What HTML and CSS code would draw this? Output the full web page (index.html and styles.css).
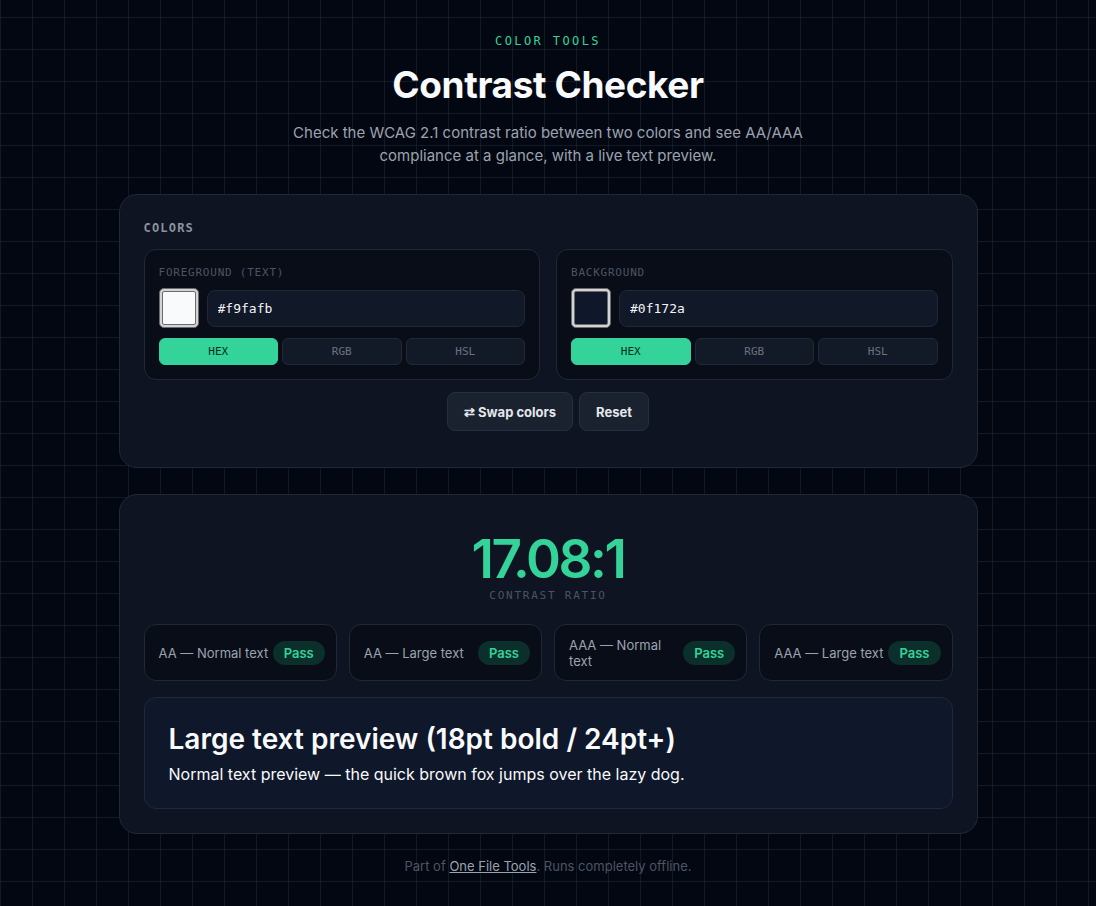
FILE: index.html
```html
<!DOCTYPE html>
<html lang="en">
<head>
    <meta charset="utf-8">
    <title>Contrast Checker</title>
    <link rel="stylesheet" href="styles.css">
</head>
<body>
<div class="page">
    <header class="head">
        <div class="eyebrow">COLOR TOOLS</div>
        <h1 class="title">Contrast Checker</h1>
        <p class="lead">Check the WCAG 2.1 contrast ratio between two colors and see AA/AAA compliance at a glance, with a live text preview.</p>
    </header>

    <section class="card">
        <div class="card-label">COLORS</div>
        <div class="pickers">
            <div class="picker">
                <div class="picker-label">FOREGROUND (TEXT)</div>
                <div class="picker-row">
                    <input type="color" class="swatch" id="fg" value="#f9fafb">
                    <input type="text" class="hex" id="fgText" value="#f9fafb">
                </div>
                <div class="formats">
                    <button class="fmt on">HEX</button>
                    <button class="fmt">RGB</button>
                    <button class="fmt">HSL</button>
                </div>
            </div>
            <div class="picker">
                <div class="picker-label">BACKGROUND</div>
                <div class="picker-row">
                    <input type="color" class="swatch" id="bg" value="#0f172a">
                    <input type="text" class="hex" id="bgText" value="#0f172a">
                </div>
                <div class="formats">
                    <button class="fmt on">HEX</button>
                    <button class="fmt">RGB</button>
                    <button class="fmt">HSL</button>
                </div>
            </div>
        </div>
        <div class="actions">
            <button class="btn">&#8644; Swap colors</button>
            <button class="btn">Reset</button>
        </div>
    </section>

    <section class="card result">
        <div class="ratio">17.08:1</div>
        <div class="ratio-label">CONTRAST RATIO</div>
        <div class="checks">
            <div class="check"><span>AA — Normal text</span><span class="badge">Pass</span></div>
            <div class="check"><span>AA — Large text</span><span class="badge">Pass</span></div>
            <div class="check"><span>AAA — Normal text</span><span class="badge">Pass</span></div>
            <div class="check"><span>AAA — Large text</span><span class="badge">Pass</span></div>
        </div>
        <div class="preview">
            <div class="preview-large">Large text preview (18pt bold / 24pt+)</div>
            <div class="preview-normal">Normal text preview — the quick brown fox jumps over the lazy dog.</div>
        </div>
    </section>

    <footer class="foot">Part of <a href="#">One File Tools</a>. Runs completely offline.</footer>
</div>
</body>
</html>
```

FILE: styles.css
```css
*{
    box-sizing: border-box;
    margin: 0;
    padding: 0;
}
body{
    background-color: #030712;
    background-image:
        linear-gradient(rgba(31,41,55,0.55) 1px, transparent 1px),
        linear-gradient(90deg, rgba(31,41,55,0.55) 1px, transparent 1px);
    background-size: 32px 32px;
    background-position: 0 17px, 0 0;
    font-family: Inter, "Noto Sans", sans-serif;
    color: #e5e7eb;
    min-height: 100vh;
}
.page{
    width: 859px;
    margin: 0 auto;
    padding: 34px 0 30px;
    display: flex;
    flex-direction: column;
    gap: 26px;
}
.head{
    text-align: center;
    margin-bottom: 1px;
}
.eyebrow{
    font-family: "DejaVu Sans Mono", monospace;
    font-size: 12px;
    letter-spacing: 0.2em;
    color: #34d399;
    line-height: 14px;
}
.title{
    margin-top: 15px;
    font-size: 37px;
    font-weight: 700;
    line-height: 44px;
    color: #f9fafb;
    letter-spacing: -0.4px;
}
.lead{
    width: 540px;
    margin: 14px auto 0;
    font-size: 15px;
    line-height: 23px;
    color: #9ca3af;
}
.card{
    background: #0e1422;
    border: 1px solid #1f2937;
    border-radius: 18px;
    padding: 25px 24px 36px;
}
.card-label{
    font-family: "DejaVu Sans Mono", monospace;
    font-size: 12px;
    font-weight: bold;
    letter-spacing: 0.1em;
    color: #8b93a1;
    line-height: 16px;
}
.pickers{
    margin-top: 13px;
    display: grid;
    grid-template-columns: 1fr 1fr;
    gap: 16px;
}
.picker{
    background: #080d18;
    border: 1px solid #1f2937;
    border-radius: 12px;
    padding: 15px 14px 14px;
}
.picker-label{
    font-family: "DejaVu Sans Mono", monospace;
    font-size: 11px;
    letter-spacing: 0.07em;
    color: #4b5563;
    line-height: 16px;
}
.picker-row{
    margin-top: 7px;
    display: flex;
    align-items: center;
    gap: 8px;
}
/* colour input drawn like the native chip: grey ring round the swatch */
.swatch{
    -webkit-appearance: none;
    appearance: none;
    width: 40px;
    height: 40px;
    flex: none;
    padding: 2px;
    border: 1px solid #6b6b6b;
    border-radius: 5px;
    background: #d4d4d8;
    cursor: pointer;
}
.swatch::-webkit-color-swatch-wrapper{
    padding: 0;
}
.swatch::-webkit-color-swatch{
    border: 1px solid #6b6b6b;
    border-radius: 2px;
}
.hex{
    flex: 1;
    height: 37px;
    background: #111827;
    border: 1px solid #1f2937;
    border-radius: 8px;
    padding: 0 10px;
    font-family: "DejaVu Sans Mono", monospace;
    font-size: 13px;
    color: #f3f4f6;
    outline: none;
}
.formats{
    margin-top: 10px;
    display: grid;
    grid-template-columns: repeat(3, 1fr);
    gap: 4px;
}
.fmt{
    height: 27px;
    background: #131a27;
    border: 1px solid #1f2937;
    border-radius: 6px;
    font-family: "DejaVu Sans Mono", monospace;
    font-size: 11px;
    color: #6b7280;
}
.fmt.on{
    background: #34d399;
    border-color: #34d399;
    color: #052e21;
}
.actions{
    margin-top: 12px;
    display: flex;
    justify-content: center;
    gap: 6px;
}
.btn{
    height: 39px;
    padding: 0 16px;
    background: #1a2230;
    border: 1px solid #243040;
    border-radius: 8px;
    font-family: Inter, "Noto Sans", sans-serif;
    font-size: 13px;
    font-weight: 700;
    color: #e5e7eb;
}
.result{
    padding: 38px 24px 24px;
    text-align: center;
}
.ratio{
    font-size: 53px;
    font-weight: 600;
    line-height: 52px;
    letter-spacing: -2.4px;
    color: #34d399;
}
.ratio-label{
    margin-top: 4px;
    font-family: "DejaVu Sans Mono", monospace;
    font-size: 11px;
    letter-spacing: 0.16em;
    color: #4b5563;
    line-height: 14px;
}
.checks{
    margin-top: 21px;
    display: grid;
    grid-template-columns: repeat(4, 1fr);
    gap: 12px;
}
.check{
    height: 57px;
    background: #080d18;
    border: 1px solid #1f2937;
    border-radius: 12px;
    padding: 0 11px 0 14px;
    display: flex;
    align-items: center;
    justify-content: space-between;
    gap: 4px;
    text-align: left;
    font-size: 13px;
    line-height: 16px;
    color: #9ca3af;
}
.badge{
    flex: none;
    padding: 4px 11px;
    border-radius: 999px;
    background: #0b2f2a;
    color: #34d399;
    font-size: 13px;
    font-weight: 600;
    line-height: 16px;
}
.preview{
    margin-top: 16px;
    background: #0f172a;
    border: 1px solid #1f2937;
    border-radius: 12px;
    padding: 23px 24px 22px;
    text-align: left;
    color: #f9fafb;
}
.preview-large{
    font-size: 28px;
    font-weight: 600;
    line-height: 36px;
}
.preview-normal{
    margin-top: 5px;
    font-size: 16px;
    line-height: 24px;
}
.foot{
    margin-top: -2px;
    text-align: center;
    font-size: 13px;
    color: #4b5563;
}
.foot a{
    color: #9ca3af;
}
```
